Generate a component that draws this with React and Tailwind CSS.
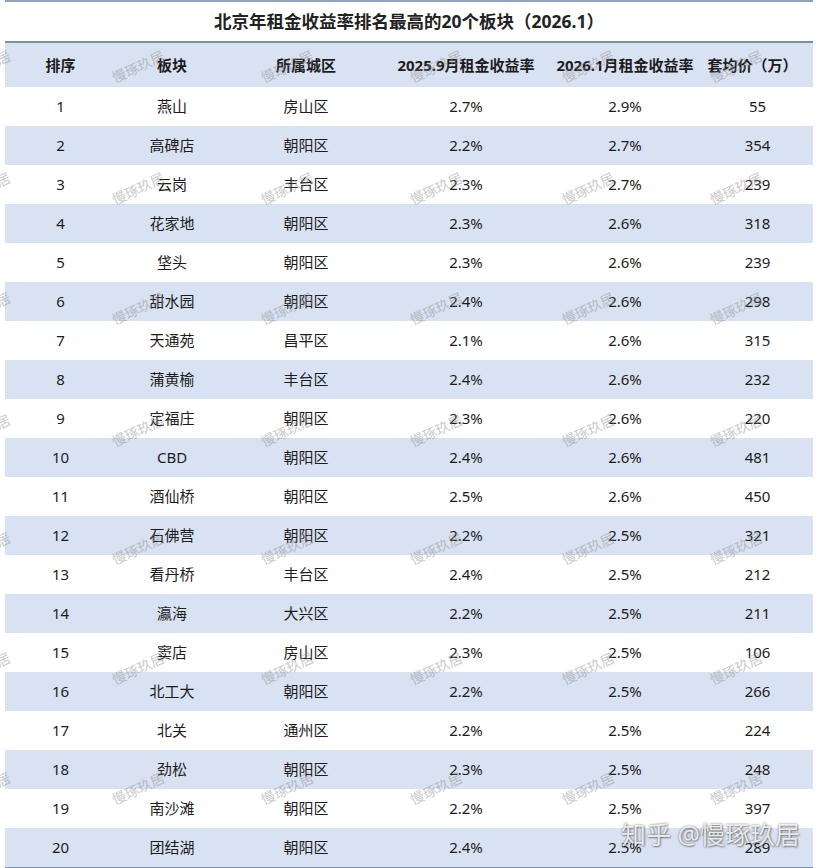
import React from "react";

const rows = [
  [1, "燕山", "房山区", "2.7%", "2.9%", "55"],
  [2, "高碑店", "朝阳区", "2.2%", "2.7%", "354"],
  [3, "云岗", "丰台区", "2.3%", "2.7%", "239"],
  [4, "花家地", "朝阳区", "2.3%", "2.6%", "318"],
  [5, "垡头", "朝阳区", "2.3%", "2.6%", "239"],
  [6, "甜水园", "朝阳区", "2.4%", "2.6%", "298"],
  [7, "天通苑", "昌平区", "2.1%", "2.6%", "315"],
  [8, "蒲黄榆", "丰台区", "2.4%", "2.6%", "232"],
  [9, "定福庄", "朝阳区", "2.3%", "2.6%", "220"],
  [10, "CBD", "朝阳区", "2.4%", "2.6%", "481"],
  [11, "酒仙桥", "朝阳区", "2.5%", "2.6%", "450"],
  [12, "石佛营", "朝阳区", "2.2%", "2.5%", "321"],
  [13, "看丹桥", "丰台区", "2.4%", "2.5%", "212"],
  [14, "瀛海", "大兴区", "2.2%", "2.5%", "211"],
  [15, "窦店", "房山区", "2.3%", "2.5%", "106"],
  [16, "北工大", "朝阳区", "2.2%", "2.5%", "266"],
  [17, "北关", "通州区", "2.2%", "2.5%", "224"],
  [18, "劲松", "朝阳区", "2.3%", "2.5%", "248"],
  [19, "南沙滩", "朝阳区", "2.2%", "2.5%", "397"],
  [20, "团结湖", "朝阳区", "2.4%", "2.5%", "289"],
];

const headers = ["排序", "板块", "所属城区", "2025.9月租金收益率", "2026.1月租金收益率", "套均价（万）"];

const wmRows = [66, 188, 308, 430, 548, 668, 788];
const wmCols = [-44, 110, 259, 408, 560, 708];

const font = { fontFamily: '"Noto Sans", "Noto Sans CJK SC", sans-serif' };

const cols = "grid grid-cols-[111px_112px_156px_164px_154px_111px]";

export default function App() {
  return (
    <div
      className="relative w-[820px] h-[868px] bg-white overflow-hidden text-[#1c1c1c]"
      style={font}
    >
      <div className="mx-[5px] w-[808px] flex flex-col">
        <div className="h-[2px] bg-[#8fa2bb]" />
        <div className="h-[39px] flex items-center justify-center text-[17.5px] font-bold text-[#222] whitespace-nowrap">
          北京年租金收益率排名最高的20个板块（2026.1）
        </div>
        <div className="h-[2px] bg-[#7d90a8]" />
        <div className={cols + " h-[44px] bg-[#d9e2f2] items-center text-[15px] font-bold"}>
          {headers.map((h, i) => (
            <div
              key={i}
              className={
                "flex justify-center whitespace-nowrap " + (i === 5 ? "pr-[10px]" : "")
              }
            >
              {h}
            </div>
          ))}
        </div>
        {rows.map((r, idx) => (
          <div
            key={idx}
            className={
              cols +
              " h-[39px] items-center text-[15px] " +
              (idx % 2 === 1 ? "bg-[#d9e2f2]" : "bg-white")
            }
          >
            {r.map((c, i) => (
              <div key={i} className="flex justify-center whitespace-nowrap">
                {c}
              </div>
            ))}
          </div>
        ))}
        <div className="h-[2px] bg-[#7d90a8]" />
      </div>

      {wmRows.map((y) =>
        wmCols.map((x) => (
          <div
            key={y + "-" + x}
            className="absolute pointer-events-none text-[14px] text-[#8a8a8a] opacity-45 whitespace-nowrap -rotate-[25deg]"
            style={{ left: x, top: y - 10 }}
          >
            慢琢玖居
          </div>
        ))
      )}

      <div className="absolute left-[621px] top-[822px] pointer-events-none text-[25px] leading-none whitespace-nowrap text-white/85 [text-shadow:0_0_2px_rgba(0,0,0,0.55),1px_1px_2px_rgba(0,0,0,0.35)]">
        知乎 @慢琢玖居
      </div>
    </div>
  );
}
